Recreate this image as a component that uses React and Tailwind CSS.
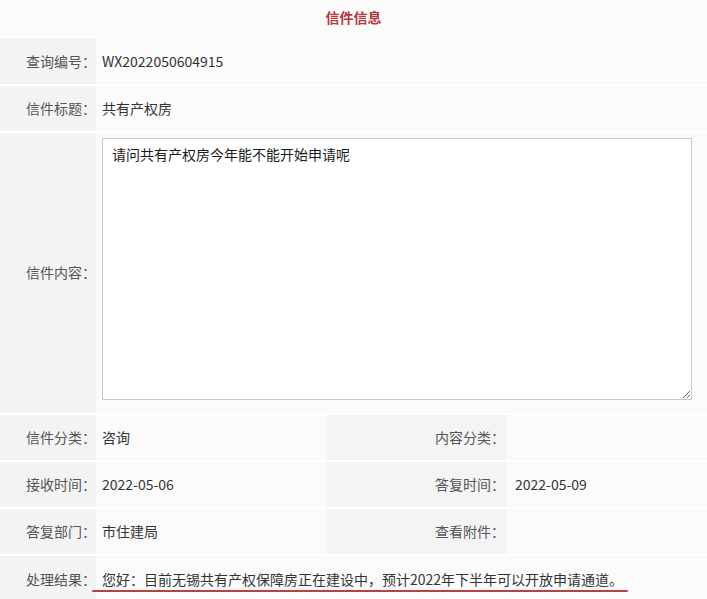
import React from "react";

const font = { fontFamily: '"Microsoft YaHei", "Noto Sans CJK SC", "Noto Sans", sans-serif' };

function Label({ children, className = "" }) {
  return (
    <div className={`bg-[#f3f3f3] flex items-center justify-end text-[14px] text-[#555] ${className}`}>
      <span>{children}</span>
    </div>
  );
}

function Value({ children, className = "" }) {
  return (
    <div className={`bg-[#fbfbfb] flex items-center pl-[6px] text-[14px] text-[#333] ${className}`}>
      {children}
    </div>
  );
}

export default function App() {
  return (
    <div className="w-[707px] h-[599px] overflow-hidden bg-[#fbfbfb]" style={font}>
      <div className="h-[39px] flex items-center justify-center bg-[#fbfbfb]">
        <span className="text-[14px] font-bold text-[#b3363a] pb-[5px]">信件信息</span>
      </div>
      <div className="flex flex-col gap-[2px] bg-white">
        <div className="grid grid-cols-[96px_1fr] h-[45px]">
          <Label>查询编号：</Label>
          <Value>WX2022050604915</Value>
        </div>
        <div className="grid grid-cols-[96px_1fr] h-[45px]">
          <Label>信件标题：</Label>
          <Value>共有产权房</Value>
        </div>
        <div className="grid grid-cols-[96px_1fr] h-[280px]">
          <Label className="pb-[2px]">信件内容：</Label>
          <div className="bg-[#fbfbfb] pl-[6px] pt-[5px]">
            <textarea
              readOnly
              defaultValue="请问共有产权房今年能不能开始申请呢"
              className="block w-[590px] h-[262px] bg-white border border-[#c9c9c9] pl-[9px] pt-[5px] text-[14px] leading-[20px] text-[#1a1a1a] outline-none"
              style={font}
            />
          </div>
        </div>
        <div className="grid grid-cols-[96px_231px_180px_1fr] h-[45px]">
          <Label>信件分类：</Label>
          <Value>咨询</Value>
          <Label className="bg-[#f4f4f5] pr-[2px]">内容分类：</Label>
          <Value className="pl-[8px]"></Value>
        </div>
        <div className="grid grid-cols-[96px_231px_180px_1fr] h-[45px]">
          <Label>接收时间：</Label>
          <Value>2022-05-06</Value>
          <Label className="bg-[#f4f4f5] pr-[2px]">答复时间：</Label>
          <Value className="pl-[8px]">2022-05-09</Value>
        </div>
        <div className="grid grid-cols-[96px_231px_180px_1fr] h-[45px]">
          <Label>答复部门：</Label>
          <Value>市住建局</Value>
          <Label className="bg-[#f4f4f5] pr-[2px]">查看附件：</Label>
          <Value className="pl-[8px]"></Value>
        </div>
        <div className="grid grid-cols-[96px_1fr] h-[47px] relative">
          <Label>处理结果：</Label>
          <Value>您好：目前无锡共有产权保障房正在建设中，预计2022年下半年可以开放申请通道。</Value>
          <div className="absolute left-[92px] top-[34px] w-[536px] h-[2px] bg-[#a8322c] rounded-full opacity-90" />
        </div>
      </div>
    </div>
  );
}
